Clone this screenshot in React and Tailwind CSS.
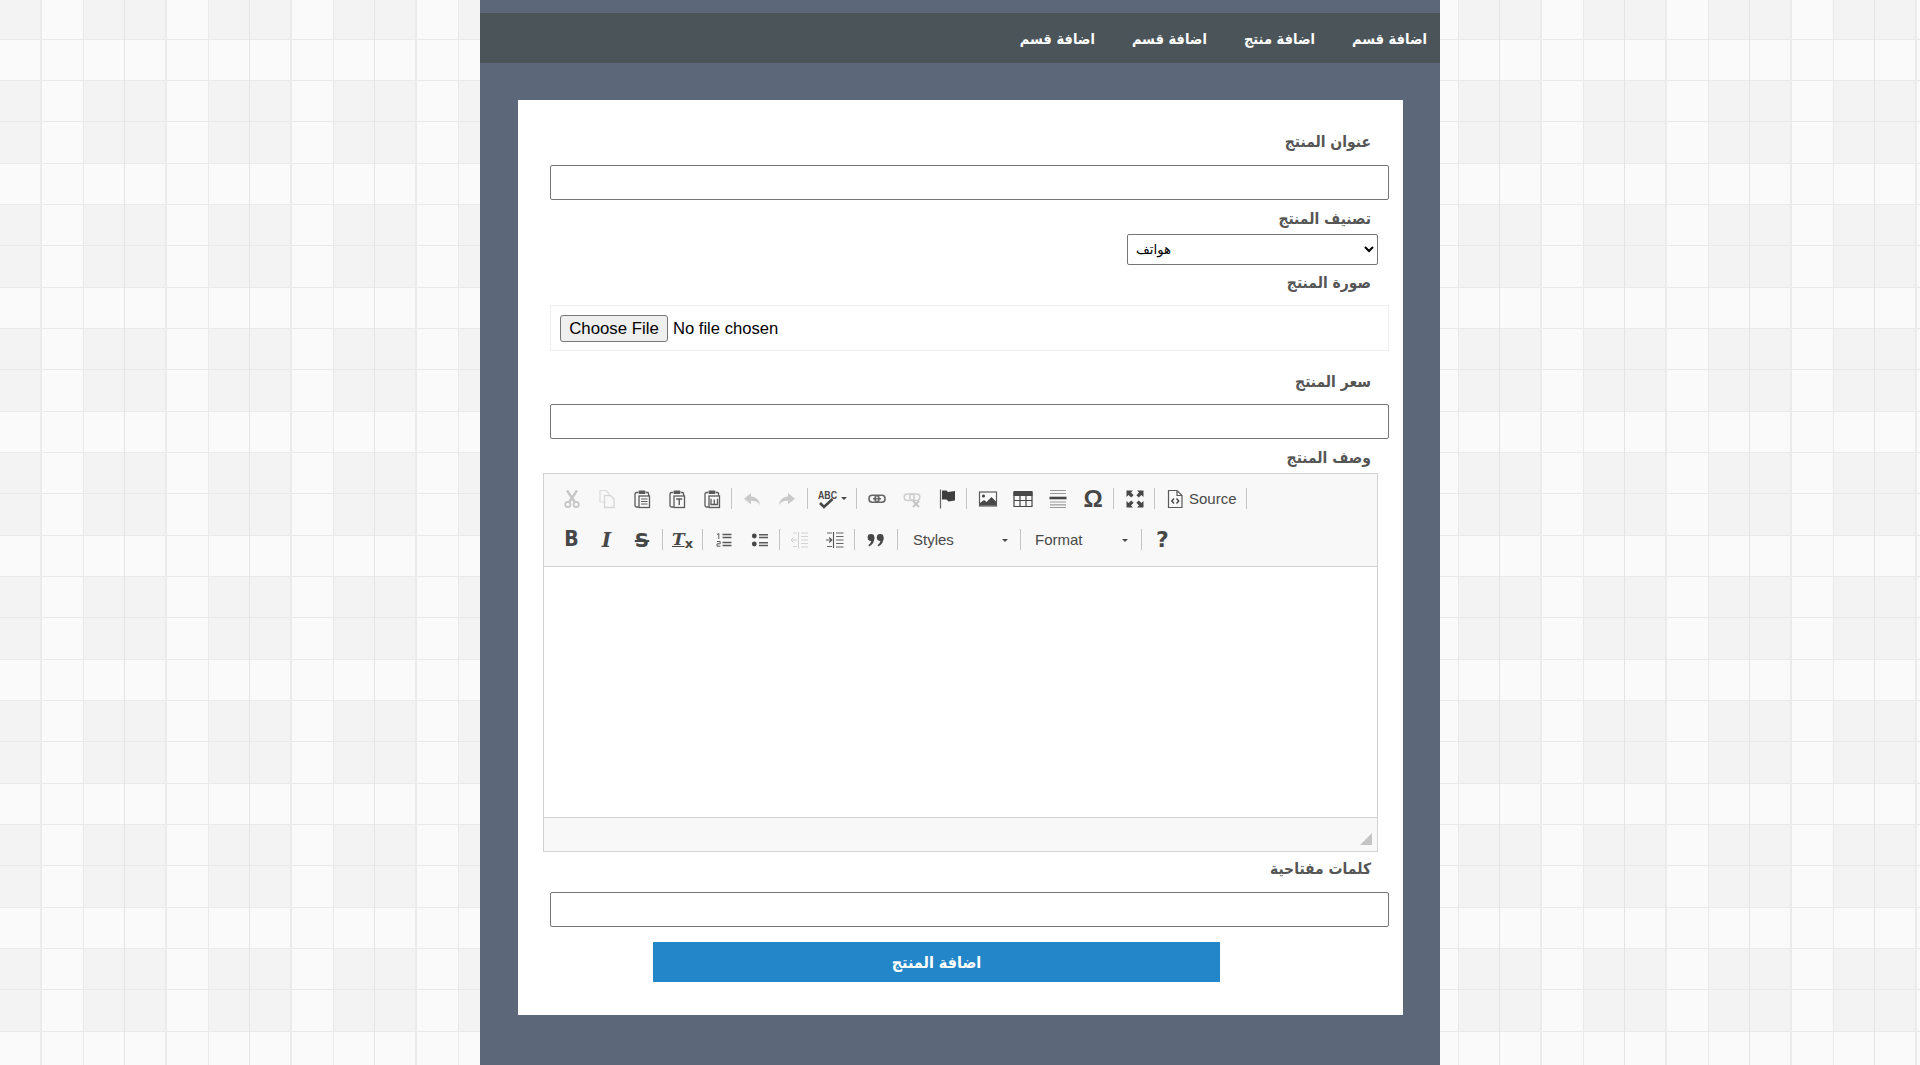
const ar = "font-['DejaVu_Sans_Condensed','DejaVu_Sans',sans-serif] font-bold";

const Svg = ({ children }) => (
  <svg width="20" height="20" viewBox="0 0 20 20" fill="none">{children}</svg>
);

const Clip = ({ children }) => (
  <Svg>
    <path d="M6 3.5H4.5Q3 3.5 3 5V16.5Q3 18 4.5 18H6.5" stroke="#5a5a5a" strokeWidth="1.3" />
    <path d="M14 3.5H15.5Q16.6 3.5 16.6 5V7" stroke="#5a5a5a" strokeWidth="1.3" />
    <rect x="6.5" y="1.5" width="7" height="3.6" rx="1" fill="#5a5a5a" />
    <rect x="7" y="7" width="10.5" height="11.5" stroke="#5a5a5a" strokeWidth="1.3" />
    {children}
  </Svg>
);

const icons = {
  cut: (
    <Svg>
      <path d="M5 1.5L12.8 13M15 1.5L7.2 13" stroke="#c6c6c6" strokeWidth="2.4" />
      <circle cx="5.8" cy="15.5" r="2.6" stroke="#c6c6c6" strokeWidth="1.8" />
      <circle cx="14.2" cy="15.5" r="2.6" stroke="#c6c6c6" strokeWidth="1.8" />
    </Svg>
  ),
  copy: (
    <Svg>
      <path d="M7 13H3V1.5H9L12 4.5V6" stroke="#dcdcdc" strokeWidth="1.2" />
      <path d="M7.5 6.5H13.5L17 10V18.5H7.5Z" stroke="#d6d6d6" strokeWidth="1.3" />
    </Svg>
  ),
  paste: (
    <Clip>
      <path d="M9 10H15.5M9 12.5H15.5M9 15H15.5" stroke="#5a5a5a" strokeWidth="1.2" />
    </Clip>
  ),
  pasteT: (
    <Clip>
      <path d="M9.2 10H15.3M12.25 10V16" stroke="#5a5a5a" strokeWidth="1.4" />
    </Clip>
  ),
  pasteW: (
    <Clip>
      <path d="M9 9.8V15.5H15.5V9.8M12.25 10.5V15" stroke="#5a5a5a" strokeWidth="1.3" />
    </Clip>
  ),
  undo: (
    <Svg>
      <path d="M9 4L2 9.7L9 15.2V11.8C12.5 11.4 15.5 12.5 18 16C17.5 11 14 7.6 9 7.4Z" fill="#c9c9c9" />
    </Svg>
  ),
  redo: (
    <Svg>
      <path d="M11 4L18 9.7L11 15.2V11.8C7.5 11.4 4.5 12.5 2 16C2.5 11 6 7.6 11 7.4Z" fill="#c9c9c9" />
    </Svg>
  ),
  link: (
    <Svg>
      <rect x="2" y="6.2" width="10" height="7" rx="3.2" stroke="#666666" strokeWidth="1.6" />
      <rect x="8" y="6.2" width="10" height="7" rx="3.2" stroke="#666666" strokeWidth="1.6" />
      <path d="M6 9.7H14" stroke="#666666" strokeWidth="1.5" />
    </Svg>
  ),
  unlink: (
    <Svg>
      <rect x="2.2" y="5" width="10" height="6.5" rx="3" stroke="#cfcfcf" strokeWidth="1.6" />
      <rect x="7.8" y="5" width="10" height="6.5" rx="3" stroke="#cfcfcf" strokeWidth="1.6" />
      <path d="M11 12L17 18M17 12L11 18" stroke="#c4c4c4" strokeWidth="1.8" />
    </Svg>
  ),
  flag: (
    <Svg>
      <path d="M3.5 0.5V19.5" stroke="#666666" strokeWidth="1.2" />
      <path d="M5 1.5H9.5L11 3L18 2V11.5L11.5 12.5L9.5 10.5H5Z" fill="#3f3f3f" />
    </Svg>
  ),
  image: (
    <Svg>
      <rect x="1.5" y="3" width="17" height="14" stroke="#5c5c5c" strokeWidth="1.2" fill="#fafafa" />
      <circle cx="5.5" cy="7" r="1.6" fill="#474747" />
      <path d="M2 16.5V14L6 11L8.5 13L13.5 8L18 12.5V16.5Z" fill="#474747" />
    </Svg>
  ),
  table: (
    <Svg>
      <rect x="0.5" y="2" width="19" height="5" fill="#474747" />
      <path d="M1 3V17.5H19V3M1 11.5H19M7 6V17.5M13 6V17.5" stroke="#474747" strokeWidth="1.2" />
    </Svg>
  ),
  hr: (
    <Svg>
      <path d="M2 1.5H18M2 4.5H18M2 13H18M2 15.8H18M2 18.5H18" stroke="#9a9a9a" strokeWidth="1.2" />
      <path d="M1.5 9H18.5" stroke="#474747" strokeWidth="2.6" />
    </Svg>
  ),
  max: (
    <Svg>
      <path d="M1.5 1.5H8L6 3.6L8.6 6.2L6.2 8.6L3.6 6L1.5 8ZM18.5 1.5H12L14 3.6L11.4 6.2L13.8 8.6L16.4 6L18.5 8ZM1.5 18.5H8L6 16.4L8.6 13.8L6.2 11.4L3.6 14L1.5 12ZM18.5 18.5H12L14 16.4L11.4 13.8L13.8 11.4L16.4 14L18.5 12Z" fill="#474747" />
    </Svg>
  ),
  source: (
    <Svg>
      <path d="M3.5 1.5H12L17 6.5V18.5H3.5ZM12 1.5V6.5H17" stroke="#5a5a5a" strokeWidth="1.2" />
      <path d="M9 9.5L6.8 12L9 14.5M11.5 9.5L13.7 12L11.5 14.5" stroke="#474747" strokeWidth="1.4" />
    </Svg>
  ),
  ol: (
    <Svg>
      <path d="M3 4.5L4.8 3.5V9M3 11.5H6.2V13.8H3V16.2H6.4" stroke="#5a5a5a" strokeWidth="1" />
      <path d="M8.5 4.5H17.5M8.5 7.5H17.5M8.5 12.5H17.5M8.5 15.5H17.5" stroke="#5a5a5a" strokeWidth="1.4" />
    </Svg>
  ),
  ul: (
    <Svg>
      <circle cx="4.3" cy="6" r="2.4" fill="#474747" />
      <circle cx="4.3" cy="14" r="2.4" fill="#474747" />
      <path d="M9 4.7H18M9 7.5H18M9 12.7H18M9 15.5H18" stroke="#5a5a5a" strokeWidth="1.4" />
    </Svg>
  ),
  outdent: (
    <Svg>
      <path d="M1 10H7M3.5 7.5L1 10L3.5 12.5M8.5 2V18" stroke="#cfcfcf" strokeWidth="1" />
      <path d="M3 3H7M3 16.5H7M11 3H18M11 6.5H18M11 10H18M11 13.5H18M11 17H18" stroke="#d4d4d4" strokeWidth="1.2" />
    </Svg>
  ),
  indent: (
    <Svg>
      <path d="M1 10H6.5M4.2 7.5L6.8 10L4.2 12.5M8.5 2V18" stroke="#555555" strokeWidth="1.1" />
      <path d="M2 3H7M2 16.5H7M11 3H18.5M11 6.5H18.5M11 10H18.5M11 13.5H18.5M11 17H18.5" stroke="#666666" strokeWidth="1.2" />
    </Svg>
  ),
  quote: (
    <Svg>
      <circle cx="5" cy="7.5" r="3.4" fill="#474747" />
      <path d="M8.4 7.5C8.4 12 6.4 15 3 16.5L2.4 15C4.4 13.7 5.4 11.5 5.4 10Z" fill="#474747" />
      <circle cx="14.2" cy="7.5" r="3.4" fill="#474747" />
      <path d="M17.6 7.5C17.6 12 15.6 15 12.2 16.5L11.6 15C13.6 13.7 14.6 11.5 14.6 10Z" fill="#474747" />
    </Svg>
  ),
};

const Btn = ({ children, w = "w-[35px]", extra = "" }) => (
  <div className={`${w} ${extra} h-full flex items-center justify-center shrink-0`}>{children}</div>
);

const Sep = () => (
  <div className="w-[5px] h-full flex items-center justify-center shrink-0">
    <div className="w-px h-[21px] bg-[#c4c4c4]" />
  </div>
);

const Caret = () => (
  <div className="w-0 h-0 border-x-[3px] border-x-transparent border-t-[3px] border-t-[#474747]" />
);

const Combo = ({ label, w, pl, gap }) => (
  <div className={`${w} ${pl} pt-[1px] h-full flex items-center shrink-0 text-[15px] text-[#484848] font-['Liberation_Sans',sans-serif]`}>
    <span className={gap}>{label}</span>
    <Caret />
  </div>
);

const Label = ({ children, className = "" }) => (
  <label dir="rtl" className={`${ar} block h-[30px] leading-[32px] pr-[18px] text-[15.5px] text-[#555555] ${className}`}>
    {children}
  </label>
);

const Field = ({ className = "" }) => (
  <input type="text" className={`block w-full h-[35px] bg-white border border-[#767676] rounded-[2px] ${className}`} />
);

const NavItem = ({ children }) => (
  <a className={`${ar} text-[14.5px] text-white leading-[53px]`}>{children}</a>
);

export default function App() {
  return (
    <div className="h-[1065px] overflow-hidden bg-[#f3f3f3] bg-[linear-gradient(to_right,transparent_40px,#ebebeb_40px,#ebebeb_42px,transparent_42px,transparent_83px,#e9e9e9_83px,#e9e9e9_84px,transparent_84px,transparent_124px,#e4e4e4_124px,#e4e4e4_125px),linear-gradient(to_bottom,transparent_39px,#e9e9e9_39px,#e9e9e9_40px,transparent_40px,transparent_80px,#e9e9e9_80px,#e9e9e9_81px,transparent_81px,transparent_121px,#e9e9e9_121px,#e9e9e9_122px,transparent_122px),linear-gradient(to_right,transparent_41px,#fafafa_41px,#fafafa_83px,transparent_83px),linear-gradient(to_bottom,transparent_40px,#fafafa_40px,#fafafa_81px,transparent_81px)] bg-[length:125px_124px]">
      <div className="w-[960px] h-full mx-auto pt-[13px] bg-[#5c6779]">
        <nav dir="rtl" className="h-[50px] bg-[#4a5459] flex gap-[37px] pr-[13px]">
          <NavItem>اضافة قسم</NavItem>
          <NavItem>اضافة منتج</NavItem>
          <NavItem>اضافة قسم</NavItem>
          <NavItem>اضافة قسم</NavItem>
        </nav>

        <div className="ml-[38px] mt-[37px] w-[885px] bg-white pl-[32px] pr-[14px] pt-[26px] pb-[33px] flex flex-col">
          <Label>عنوان المنتج</Label>
          <Field className="mt-[9px]" />

          <Label className="mt-[3px]">تصنيف المنتج</Label>
          <select className="mt-px self-end mr-[11px] w-[251px] h-[31px] pl-[4px] bg-white border border-[#767676] rounded-[2px] text-[13.33px] text-black font-['DejaVu_Sans',sans-serif]">
            <option>هواتف</option>
          </select>

          <Label className="mt-[2px]">صورة المنتج</Label>
          <div className="mt-[8px] h-[46px] border border-[#eeeeee] flex items-center pl-[9px]">
            <input
              type="file"
              className="text-[16.6px] text-black font-['Liberation_Sans',sans-serif] file:mr-[5px] file:h-[27px] file:w-[108px] file:pb-[2px] file:bg-[#efefef] file:border file:border-[#767676] file:rounded-[3px] file:text-[16.8px] file:text-black"
            />
          </div>

          <Label className="mt-[15px]">سعر المنتج</Label>
          <Field className="mt-[8px]" />

          <Label className="mt-[3px]">وصف المنتج</Label>
          <div className="mt-px -ml-[7px] mr-[11px] border border-[#d1d1d1] flex flex-col">
            <div className="h-[93px] bg-[#f8f8f8] border-b border-[#d1d1d1] pt-[4px] pl-[10px]">
              <div className="h-[41px] flex">
                <Btn>{icons.cut}</Btn>
                <Btn>{icons.copy}</Btn>
                <Btn>{icons.paste}</Btn>
                <Btn>{icons.pasteT}</Btn>
                <Btn>{icons.pasteW}</Btn>
                <Sep />
                <Btn>{icons.undo}</Btn>
                <Btn w="w-[36px]">{icons.redo}</Btn>
                <Sep />
                <Btn w="w-[44px]">
                  <div className="flex items-center gap-[3px]">
                    <svg width="21" height="20" viewBox="0 0 21 20" fill="none" className="overflow-visible">
                      <text x="1" y="10" fontSize="11" fontWeight="700" fill="#474747" fontFamily="Liberation Sans, sans-serif" textLength="19" lengthAdjust="spacingAndGlyphs">ABC</text>
                      <path d="M3 14L7 18L15.5 10" stroke="#474747" strokeWidth="2.6" />
                    </svg>
                    <Caret />
                  </div>
                </Btn>
                <Sep />
                <Btn>{icons.link}</Btn>
                <Btn>{icons.unlink}</Btn>
                <Btn extra="pl-[1px]">{icons.flag}</Btn>
                <Sep />
                <Btn w="w-[36px]" extra="pl-[1px]">{icons.image}</Btn>
                <Btn>{icons.table}</Btn>
                <Btn>{icons.hr}</Btn>
                <Btn w="w-[36px]">
                  <span className="text-[24px] font-bold text-[#474747] font-['Liberation_Sans',sans-serif]">Ω</span>
                </Btn>
                <Sep />
                <Btn w="w-[36px]" extra="pl-[2px]">{icons.max}</Btn>
                <Sep />
                <div className="w-[87px] h-full flex items-center pl-[8px] gap-[4px] shrink-0 text-[15px] text-[#484848] font-['Liberation_Sans',sans-serif]">
                  {icons.source}
                  <span className="pt-[2px]">Source</span>
                </div>
                <Sep />
              </div>
              <div className="h-[41px] flex">
                <Btn><span className="text-[21px] font-bold text-[#474747] font-['DejaVu_Sans_Condensed','DejaVu_Sans',sans-serif]">B</span></Btn>
                <Btn><span className="text-[20px] font-bold italic text-[#474747] font-['DejaVu_Serif',serif]">I</span></Btn>
                <Btn w="w-[36px]"><span className="text-[20px] font-bold text-[#474747] line-through decoration-[2px] font-['DejaVu_Sans',sans-serif]">S</span></Btn>
                <Sep />
                <Btn>
                  <span className="text-[17px] font-bold italic underline text-[#474747] font-['DejaVu_Serif',serif]">T</span>
                  <span className="text-[13px] font-bold text-[#474747] mt-[9px] font-['DejaVu_Sans',sans-serif]">x</span>
                </Btn>
                <Sep />
                <Btn w="w-[37px]">{icons.ol}</Btn>
                <Btn>{icons.ul}</Btn>
                <Sep />
                <Btn>{icons.outdent}</Btn>
                <Btn>{icons.indent}</Btn>
                <Sep />
                <Btn w="w-[38px]">{icons.quote}</Btn>
                <Sep />
                <Combo label="Styles" w="w-[118px]" pl="pl-[13px]" gap="w-[89px]" />
                <Sep />
                <Combo label="Format" w="w-[116px]" pl="pl-[12px]" gap="w-[87px]" />
                <Sep />
                <Btn w="w-[37px]"><span className="text-[22px] font-bold text-[#474747] font-['DejaVu_Sans',sans-serif]">?</span></Btn>
              </div>
            </div>
            <div className="h-[250px] bg-white" />
            <div className="h-[34px] bg-[#f8f8f8] border-t border-[#d1d1d1] flex justify-end items-end pr-[5px] pb-[6px]">
              <svg width="12" height="12" viewBox="0 0 12 12">
                <path d="M12 0V12H0Z" fill="#c4c4c4" />
              </svg>
            </div>
          </div>

          <Label className="mt-px">كلمات مفتاحية</Label>
          <Field className="mt-[9px]" />

          <button dir="rtl" className={`${ar} mt-[15px] ml-[103px] w-[567px] h-[40px] pt-[2px] bg-[#2386c8] text-white text-[16px]`}>
            اضافة المنتج
          </button>
        </div>
      </div>
    </div>
  );
}
